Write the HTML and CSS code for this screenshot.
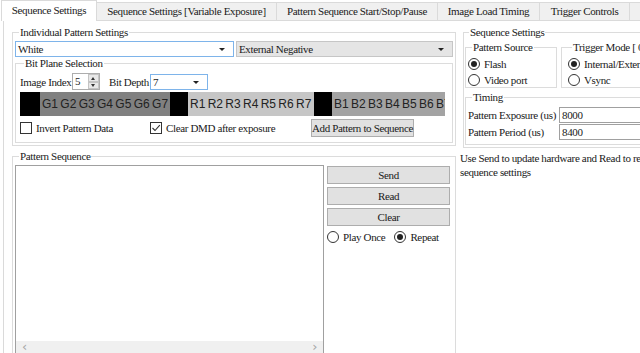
FILE: index.html
```html
<!DOCTYPE html>
<html lang="en">

<head>
  <meta charset="UTF-8" />
  <title>Sequence Settings</title>
  <link rel="stylesheet" href="styles.css">
</head>

<body>
  <!-- tab strip -->
  <div class="tabs">
    <div class="tab active t1">Sequence Settings</div>
    <div class="tab t2">Sequence Settings [Variable Exposure]</div>
    <div class="tab t3">Pattern Sequence Start/Stop/Pause</div>
    <div class="tab t4">Image Load Timing</div>
    <div class="tab t5">Trigger Controls</div>
    <div class="tab t6">&nbsp;</div>
  </div>

  <div class="page">
    <!-- left column -->
    <div class="col-left">
      <fieldset class="grp-pattern">
        <legend>Individual Pattern Settings</legend>
        <div class="row-combo">
          <div class="combo focus wide"><span>White</span><i class="arrow"></i></div>
          <div class="combo gray fill"><span>External Negative</span><i class="arrow"></i></div>
        </div>

        <fieldset class="grp-bits">
          <legend>Bit Plane Selection</legend>
          <div class="row-index">
            <span class="lbl-index">Image Index</span>
            <div class="spin">
              <span>5</span>
              <div class="spin-btns"><b class="up"></b><b class="down"></b></div>
            </div>
            <span class="lbl-depth">Bit Depth</span>
            <div class="combo focus small"><span>7</span><i class="arrow"></i></div>
          </div>

          <div class="bits">
            <div class="blk"></div>
            <div class="seg seg-g">G1 G2 G3 G4 G5 G6 G7</div>
            <div class="blk"></div>
            <div class="seg seg-r">R1 R2 R3 R4 R5 R6 R7</div>
            <div class="blk"></div>
            <div class="seg seg-b">B1 B2 B3 B4 B5 B6 B7</div>
          </div>

          <div class="row-check">
            <label class="chk-item c1"><span class="chk"></span>Invert Pattern Data</label>
            <label class="chk-item c2"><span class="chk on">
                <svg width="10" height="10" viewBox="0 0 10 10"><polyline points="1.5,5 4,7.5 8.8,2.2" fill="none" stroke="#333" stroke-width="1.1" /></svg>
              </span>Clear DMD after exposure</label>
            <button class="btn btn-add">Add Pattern to Sequence</button>
          </div>
        </fieldset>
      </fieldset>

      <fieldset class="grp-seq">
        <legend>Pattern Sequence</legend>
        <div class="seq-body">
          <div class="listbox">
            <div class="hscroll"><span>&lsaquo;</span><span>&rsaquo;</span></div>
          </div>
          <div class="seq-side">
            <button class="btn">Send</button>
            <button class="btn">Read</button>
            <button class="btn">Clear</button>
            <div class="row-radio">
              <label class="radio-item"><span class="radio"></span>Play Once</label>
              <label class="radio-item"><span class="radio on"></span>Repeat</label>
            </div>
          </div>
        </div>
      </fieldset>
    </div>

    <!-- right column -->
    <div class="col-right">
      <fieldset class="grp-settings">
        <legend>Sequence Settings</legend>
        <div class="row-sub">
          <fieldset class="grp-source">
            <legend>Pattern Source</legend>
            <label class="radio-item"><span class="radio on"></span>Flash</label>
            <label class="radio-item"><span class="radio"></span>Video port</label>
          </fieldset>
          <fieldset class="grp-trigger">
            <legend>Trigger Mode [ 0 ]</legend>
            <label class="radio-item"><span class="radio on"></span>Internal/External</label>
            <label class="radio-item"><span class="radio"></span>Vsync</label>
          </fieldset>
        </div>
        <fieldset class="grp-timing">
          <legend>Timing</legend>
          <div class="row-field">
            <span class="lbl-field">Pattern Exposure (us)</span>
            <div class="text-box">8000</div>
          </div>
          <div class="row-field">
            <span class="lbl-field">Pattern Period (us)</span>
            <div class="text-box">8400</div>
          </div>
        </fieldset>
      </fieldset>
      <p class="hint">Use Send to update hardware and Read to retrieve the<br>sequence settings</p>
    </div>
  </div>
</body>

</html>
```

FILE: styles.css
```css
* {
  margin: 0;
  padding: 0;
  box-sizing: border-box;
}

body {
  width: 640px;
  height: 353px;
  overflow: hidden;
  background: #fff;
  color: #1a1a1a;
  font: 11px/14px "Liberation Serif", "Noto Sans CJK TC", serif;
  letter-spacing: -0.35px;
}

/* tabs */
.tabs {
  display: flex;
  height: 20px;
  padding-left: 2px;
  align-items: flex-end;
}

.tab {
  height: 18px;
  line-height: 16px;
  text-align: center;
  background: #f0f0f0;
  border: 1px solid #dadada;
  border-bottom: none;
  margin-left: -1px;
  white-space: nowrap;
  flex-shrink: 0;
}

.tab.active {
  background: #fff;
  position: relative;
  z-index: 1;
  margin-bottom: -1px;
  height: 21px;
  line-height: 19px;
}

.t1 { width: 96px; }
.t2 { width: 181px; }
.t3 { width: 162px; }
.t4 { width: 103px; }
.t5 { width: 91px; }
.t6 { width: 60px; }

.page {
  display: flex;
  gap: 7px;
  margin-left: 3px;
  height: 333px;
  border-left: 1px solid #dadada;
  border-top: 1px solid #dadada;
  padding: 5px 0 0 8px;
}

/* group boxes */
fieldset {
  border: 1px solid #dcdcdc;
  min-width: 0;
  padding: 0 2px;
}

legend {
  margin-left: 4px;
  padding: 0 1px;
  line-height: 12px;
  white-space: nowrap;
}

.col-left {
  width: 444px;
  flex-shrink: 0;
  display: flex;
  flex-direction: column;
  gap: 4px;
}

.col-right {
  width: 200px;
  flex-shrink: 0;
}

.grp-pattern {
  padding-top: 3px;
  padding-bottom: 2px;
}

.row-combo {
  display: flex;
  gap: 2px;
}

.combo {
  height: 16px;
  line-height: 14px;
  border: 1px solid #adadad;
  padding-left: 2px;
  position: relative;
  background: #fff;
}

.combo.focus {
  border-color: #7eb4ea;
}

.combo.gray {
  background: #e5e5e5;
  border-color: #c6c6c6;
}

.combo.wide { width: 219px; }
.combo.fill { flex: 1; }
.combo.small { width: 58px; }

.arrow {
  position: absolute;
  right: 8px;
  top: 6px;
  border-left: 3px solid transparent;
  border-right: 3px solid transparent;
  border-top: 3px solid #222;
}

.grp-bits {
  padding: 4px 0 5px 4px;
}

.row-index {
  display: flex;
  align-items: center;
  height: 17px;
  white-space: nowrap;
}

.lbl-index { width: 52px; }
.lbl-depth { width: 41px; margin-left: 9px; }

.spin {
  width: 28px;
  height: 17px;
  border: 1px solid #adadad;
  display: flex;
  justify-content: space-between;
  padding-left: 2px;
  line-height: 15px;
}

.spin-btns {
  width: 11px;
  display: flex;
  flex-direction: column;
}

.spin-btns b {
  flex: 1;
  background: #e8e8e8;
  border: 1px solid #c4c4c4;
  position: relative;
}

.spin-btns b::after {
  content: "";
  position: absolute;
  left: 2px;
  top: 2px;
  border-left: 2.5px solid transparent;
  border-right: 2.5px solid transparent;
}

.spin-btns .up::after { border-bottom: 3px solid #333; }
.spin-btns .down::after { border-top: 3px solid #333; top: 1px; }

.bits {
  display: flex;
  height: 24px;
  margin-top: 2px;
  width: 425px;
  overflow: hidden;
  font: 12px/24px "Liberation Sans", "Noto Sans", sans-serif;
  letter-spacing: 0;
  color: #222;
  white-space: nowrap;
}

.blk {
  width: 18px;
  background: #000;
  flex-shrink: 0;
}

.bits .blk:first-child { width: 20px; }

.seg {
  flex-shrink: 0;
  overflow: hidden;
  padding-left: 2px;
  word-spacing: -1px;
}

.seg-g { width: 130px; background: #808080; }
.seg-r { width: 126px; background: #c6c6c6; }
.seg-b { width: 120px; background: #a3a3a3; }

.row-check {
  display: flex;
  align-items: center;
  margin-top: 3px;
  height: 18px;
}

.chk-item,
.radio-item {
  display: flex;
  align-items: center;
  white-space: nowrap;
}

.chk-item.c1 { width: 130px; }
.chk-item.c2 { width: 161px; }

.chk {
  width: 12px;
  height: 12px;
  border: 1px solid #333;
  margin-right: 4px;
  background: #fff;
  display: flex;
  align-items: center;
  justify-content: center;
}

.radio {
  width: 12px;
  height: 12px;
  border: 1px solid #333;
  border-radius: 50%;
  margin-right: 4px;
  background: #fff;
  position: relative;
  flex-shrink: 0;
}

.radio.on::after {
  content: "";
  position: absolute;
  left: 2px;
  top: 2px;
  width: 6px;
  height: 6px;
  border-radius: 50%;
  background: #222;
}

.btn {
  font: inherit;
  letter-spacing: inherit;
  color: #1a1a1a;
  background: #e1e1e1;
  border: 1px solid #adadad;
  height: 18px;
  line-height: 16px;
  white-space: nowrap;
}

/* pattern sequence */
.grp-seq {
  flex: 1;
  padding: 3px 2px 0;
  border-bottom: none;
}

.seq-body {
  display: flex;
  gap: 3px;
  height: 189px;
}

.listbox {
  width: 309px;
  border: 1px solid #a0a0a0;
  border-bottom: none;
  display: flex;
  flex-direction: column;
  justify-content: flex-end;
}

.hscroll {
  height: 13px;
  background: #f0f0f0;
  display: flex;
  justify-content: space-between;
  padding: 0 6px;
  color: #a6a6a6;
  font: 13px/12px "DejaVu Sans", sans-serif;
}

.seq-side {
  width: 123px;
  display: flex;
  flex-direction: column;
  gap: 3px;
  padding-top: 1px;
}

.row-radio {
  display: flex;
  gap: 9px;
  margin-top: 1px;
}

/* right column */
.grp-settings {
  padding: 3px 0 2px 1px;
  width: 200px;
}

.row-sub {
  display: flex;
  gap: 4px;
}

.grp-source,
.grp-trigger {
  padding: 3px 0 3px 2px;
  height: 47px;
}

.grp-source { width: 92px; }
.grp-trigger { flex: 1; padding-left: 6px; }

.grp-source .radio-item,
.grp-trigger .radio-item {
  height: 16px;
}

.grp-timing {
  margin-top: 3px;
  padding: 4px 0 4px 2px;
}

.row-field {
  display: flex;
  align-items: center;
}

.row-field + .row-field {
  margin-top: 1px;
}

.lbl-field {
  width: 91px;
  white-space: nowrap;
}

.text-box {
  flex: 1;
  height: 16px;
  line-height: 14px;
  border: 1px solid #a0a0a0;
  padding-left: 2px;
}

.hint {
  margin: 3px 0 0 -3px;
  width: 200px;
  line-height: 14px;
  white-space: nowrap;
}
```
